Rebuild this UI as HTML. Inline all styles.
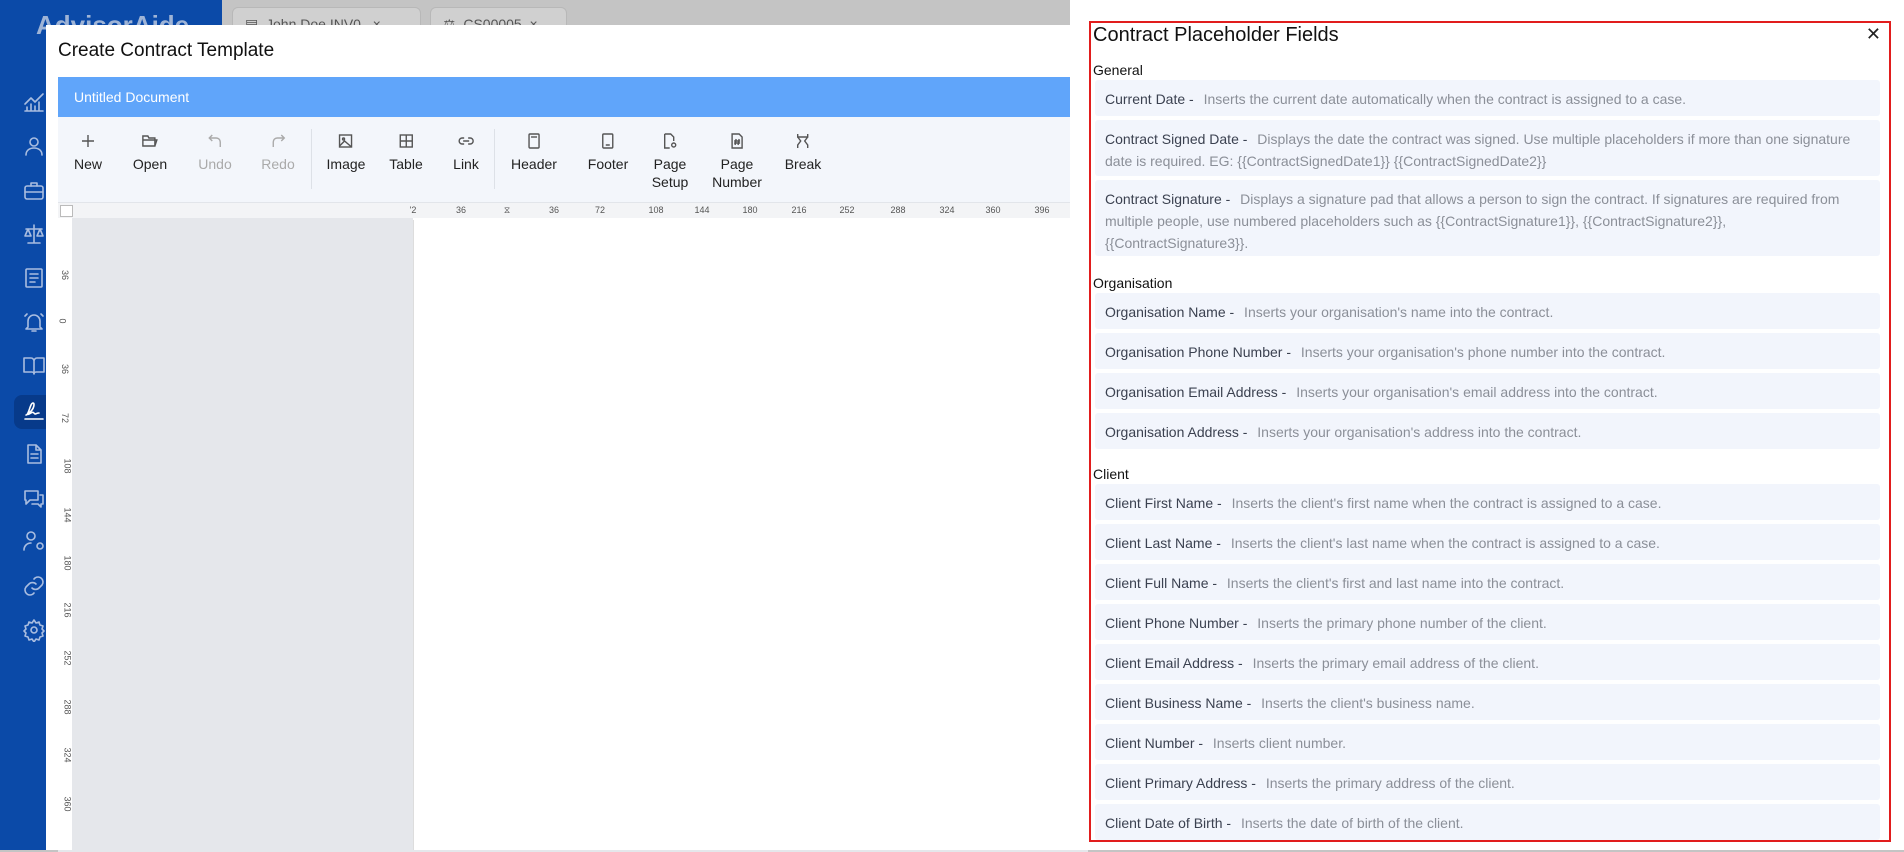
<!DOCTYPE html>
<html><head><meta charset="utf-8"><style>
*{box-sizing:border-box;margin:0;padding:0}
body{width:1904px;height:850px;overflow:hidden;font-family:"Liberation Sans",sans-serif;background:#c4c4c4;position:relative}
.abs{position:absolute}
.side{left:0;top:0;width:222px;height:850px;background:#0b4aa8}
.logo{left:36px;top:10px;font-size:26px;font-weight:bold;color:#9fb4d6}
.ic{position:absolute;left:22px;width:24px;height:24px}
.ic svg{width:24px;height:24px;fill:none;stroke:#a9bde0;stroke-width:1.6;stroke-linecap:round;stroke-linejoin:round}
.tab{top:7px;height:30px;background:#d0d0d0;border:1px solid #b8b8b8;border-radius:6px 6px 0 0;font-size:14px;color:#555;padding:8px 12px}
.modal{left:46px;top:25px;width:1030px;height:825px;background:#fff}
.mt{left:12px;top:15px;font-size:19px;color:#111}
.bar{left:12px;top:52px;width:1030px;height:40px;background:#60a5fa;color:#fff;font-size:14px;padding:12px 16px}
.tb{left:12px;top:92px;width:1030px;height:86px;background:#f3f6fb;border-bottom:1px solid #e2e5ea}
.tbi{position:absolute;top:16px;text-align:center;font-size:14px;color:#222;line-height:18px;transform:translateX(-50%)}
.tbi svg{width:16px;height:16px;fill:none;stroke:#555;stroke-width:1.4;display:block;margin:0 auto 6px}
.dis{color:#aaa}.dis svg{stroke:#aaa}
.sep{position:absolute;top:12px;width:1px;height:60px;background:#dde1e7}
.panel{left:1070px;top:0;width:834px;height:850px;background:#fff}
.box{position:absolute;left:19px;top:21px;width:802px;height:821px;border:2px solid #e11d1d}
.pt{position:absolute;left:2px;top:1px;font-size:20px;color:#111}
.x{position:absolute;right:8px;top:1px;font-size:18px;color:#222}
.sec{position:absolute;left:2px;font-size:14px;color:#111}
.row{position:absolute;left:4px;width:785px;background:#f2f5fc;border-radius:3px;padding:8px 10px;font-size:14px;line-height:22px;color:#8b8f98}
.row b{font-weight:normal;color:#3b4150;margin-right:6px}
.rl{position:absolute;top:2px;font-size:9px;color:#555;transform:translateX(-50%)}
.vl{position:absolute;left:2px;font-size:9px;color:#555;transform:rotate(90deg)}
</style></head><body>
<div class="abs side"></div>
<div class="abs logo">AdvisorAide</div>
<div class="abs" style="left:14px;top:395px;width:40px;height:34px;background:#073a8a;border-radius:8px"></div>
<div class="ic" style="top:91px"><svg viewBox="0 0 24 24"><path d="M3 20h18M5 16v4M9 13v7M13 15v5M17 11v9M3 13l6-6 4 4 8-8"/></svg></div>
<div class="ic" style="top:134px"><svg viewBox="0 0 24 24"><circle cx="12" cy="8" r="4"/><path d="M4 21c0-5 4-7 8-7s8 2 8 7"/></svg></div>
<div class="ic" style="top:179px"><svg viewBox="0 0 24 24"><rect x="3" y="7" width="18" height="13" rx="2"/><path d="M9 7V4h6v3M3 13h18"/></svg></div>
<div class="ic" style="top:222px"><svg viewBox="0 0 24 24"><path d="M12 3v18M6 21h12M4 7h16M6 7l-3 7h6zM18 7l-3 7h6z"/></svg></div>
<div class="ic" style="top:266px"><svg viewBox="0 0 24 24"><rect x="4" y="3" width="16" height="18" rx="1"/><path d="M8 8h8M8 12h8M8 16h5"/></svg></div>
<div class="ic" style="top:310px"><svg viewBox="0 0 24 24"><path d="M6 17V11a6 6 0 0 1 12 0v6l2 2H4zM10 21h4M3 6l2-2M21 6l-2-2"/></svg></div>
<div class="ic" style="top:353px"><svg viewBox="0 0 24 24"><path d="M2 5h7a3 3 0 0 1 3 3v13a2 2 0 0 0-2-2H2zM22 5h-7a3 3 0 0 0-3 3v13a2 2 0 0 1 2-2h8z"/></svg></div>
<div class="ic" style="top:398px"><svg viewBox="0 0 24 24" style="stroke:#fff"><path d="M3 21h18M4 17c3 0 4-12 7-12 2 0 1 6-3 9s-2 3 1 1 3 1 4 1 2-1 4-1"/></svg></div>
<div class="ic" style="top:442px"><svg viewBox="0 0 24 24"><path d="M6 3h8l5 5v13H6zM14 3v5h5M9 12h7M9 16h7"/></svg></div>
<div class="ic" style="top:486px"><svg viewBox="0 0 24 24"><path d="M3 5h13v9H8l-4 4v-4H3zM18 9h3v9h-2v3l-3-3h-6"/></svg></div>
<div class="ic" style="top:529px"><svg viewBox="0 0 24 24"><circle cx="9" cy="7" r="4"/><path d="M2 21c0-4 3-7 7-7M18 14a3 3 0 1 0 0 6 3 3 0 0 0 0-6z"/></svg></div>
<div class="ic" style="top:574px"><svg viewBox="0 0 24 24"><path d="M10 14a5 5 0 0 0 7 0l3-3a5 5 0 0 0-7-7l-1 1M14 10a5 5 0 0 0-7 0l-3 3a5 5 0 0 0 7 7l1-1"/></svg></div>
<div class="ic" style="top:618px"><svg viewBox="0 0 24 24"><circle cx="12" cy="12" r="3"/><path d="M12 2l2 3 3-1 1 3 3 1-1 3 2 2-2 2 1 3-3 1-1 3-3-1-2 3-2-3-3 1-1-3-3-1 1-3-2-2 2-2-1-3 3-1 1-3 3 1z"/></svg></div>
<div class="abs tab" style="left:232px;width:189px">▤ &nbsp;John Doe INV0 &nbsp; ×</div>
<div class="abs tab" style="left:430px;width:137px">⚖ &nbsp;CS00005 &nbsp;×</div>

<div class="abs modal">
<div class="abs mt">Create Contract Template</div>
<div class="abs bar">Untitled Document</div>
<div class="abs tb">
<div class="tbi" style="left:30px"><svg viewBox="0 0 16 16"><path d="M8 2v12M2 8h12"/></svg>New</div>
<div class="tbi" style="left:92px"><svg viewBox="0 0 16 16"><path d="M1 3h5l1 2h6v8H1zM1 7h14l-2 6"/></svg>Open</div>
<div class="tbi dis" style="left:157px"><svg viewBox="0 0 16 16"><path d="M5 2L2 5l3 3M2 5h7a4 4 0 0 1 4 4v5"/></svg>Undo</div>
<div class="tbi dis" style="left:220px"><svg viewBox="0 0 16 16"><path d="M11 2l3 3-3 3M14 5H7a4 4 0 0 0-4 4v5"/></svg>Redo</div>
<div class="sep" style="left:253px"></div>
<div class="tbi" style="left:288px"><svg viewBox="0 0 16 16"><rect x="2" y="2" width="12" height="12"/><circle cx="6" cy="6" r="1"/><path d="M2 13l5-5 7 6"/></svg>Image</div>
<div class="tbi" style="left:348px"><svg viewBox="0 0 16 16"><rect x="2" y="2" width="12" height="12"/><path d="M8 2v12M2 8h12"/></svg>Table</div>
<div class="tbi" style="left:408px"><svg viewBox="0 0 16 16"><path d="M6 5H4a3 3 0 0 0 0 6h2M10 5h2a3 3 0 0 1 0 6h-2M5 8h6"/></svg>Link</div>
<div class="sep" style="left:436px"></div>
<div class="tbi" style="left:476px"><svg viewBox="0 0 16 16"><rect x="3" y="1" width="10" height="14" rx="1"/><path d="M5 4h6"/></svg>Header</div>
<div class="tbi" style="left:550px"><svg viewBox="0 0 16 16"><rect x="3" y="1" width="10" height="14" rx="1"/><path d="M6 12h4"/></svg>Footer</div>
<div class="tbi" style="left:612px"><svg viewBox="0 0 16 16"><path d="M3 1h6l3 3v4M3 1v14h5"/><circle cx="12" cy="12" r="2"/></svg>Page<br>Setup</div>
<div class="tbi" style="left:679px"><svg viewBox="0 0 16 16"><path d="M3 1h7l3 3v11H3zM7 6l-1 6M10 6l-1 6M5 8h6M5 10h6"/></svg>Page<br>Number</div>
<div class="tbi" style="left:745px"><svg viewBox="0 0 16 16"><path d="M3 1v3h10V1M3 15v-3l3-4-3-4M13 15v-3l-3-4 3-4"/></svg>Break</div>
</div>
<div class="abs" style="left:12px;top:178px;width:1030px;height:15px;background:#f3f4f6">
<span class="rl" style="left:355px">'2</span><span class="rl" style="left:403px">36</span><span class="rl" style="left:449px">⧖</span><span class="rl" style="left:496px">36</span><span class="rl" style="left:542px">72</span><span class="rl" style="left:598px">108</span><span class="rl" style="left:644px">144</span><span class="rl" style="left:692px">180</span><span class="rl" style="left:741px">216</span><span class="rl" style="left:789px">252</span><span class="rl" style="left:840px">288</span><span class="rl" style="left:889px">324</span><span class="rl" style="left:935px">360</span><span class="rl" style="left:984px">396</span>
</div>
<div class="abs" style="left:14px;top:180px;width:13px;height:12px;border:1px solid #bbb;background:#fff"></div>
<div class="abs" style="left:12px;top:193px;width:15px;height:632px;background:#fff;border-right:1px solid #e5e7eb">
<span class="vl" style="top:52px">36</span><span class="vl" style="top:98px">0</span><span class="vl" style="top:146px">36</span><span class="vl" style="top:195px">72</span><span class="vl" style="top:243px">108</span><span class="vl" style="top:292px">144</span><span class="vl" style="top:340px">180</span><span class="vl" style="top:387px">216</span><span class="vl" style="top:435px">252</span><span class="vl" style="top:484px">288</span><span class="vl" style="top:532px">324</span><span class="vl" style="top:581px">360</span>
</div>
<div class="abs" style="left:27px;top:193px;width:340px;height:632px;background:#e5e7eb"></div>
<div class="abs" style="left:367px;top:195px;width:670px;height:630px;background:#fff;border-left:1px solid #ddd"></div>
<div class="abs" style="left:12px;top:825px;width:1030px;height:2px;background:#e5e7eb"></div>
</div>

<div class="abs panel">
<div class="box">
<div class="pt">Contract Placeholder Fields</div>
<div class="x">✕</div>
<div class="sec" style="top:39px">General</div>
<div class="row" style="top:57px;height:36px"><b>Current Date -</b> Inserts the current date automatically when the contract is assigned to a case.</div>
<div class="row" style="top:97px;height:56px"><b>Contract Signed Date -</b> Displays the date the contract was signed. Use multiple placeholders if more than one signature date is required. EG: {{ContractSignedDate1}} {{ContractSignedDate2}}</div>
<div class="row" style="top:157px;height:76px"><b>Contract Signature -</b> Displays a signature pad that allows a person to sign the contract. If signatures are required from multiple people, use numbered placeholders such as {{ContractSignature1}}, {{ContractSignature2}}, {{ContractSignature3}}.</div>
<div class="sec" style="top:252px">Organisation</div>
<div class="row" style="top:270px;height:36px"><b>Organisation Name -</b> Inserts your organisation's name into the contract.</div>
<div class="row" style="top:310px;height:36px"><b>Organisation Phone Number -</b> Inserts your organisation's phone number into the contract.</div>
<div class="row" style="top:350px;height:36px"><b>Organisation Email Address -</b> Inserts your organisation's email address into the contract.</div>
<div class="row" style="top:390px;height:36px"><b>Organisation Address -</b> Inserts your organisation's address into the contract.</div>
<div class="sec" style="top:443px">Client</div>
<div class="row" style="top:461px;height:36px"><b>Client First Name -</b> Inserts the client's first name when the contract is assigned to a case.</div>
<div class="row" style="top:501px;height:36px"><b>Client Last Name -</b> Inserts the client's last name when the contract is assigned to a case.</div>
<div class="row" style="top:541px;height:36px"><b>Client Full Name -</b> Inserts the client's first and last name into the contract.</div>
<div class="row" style="top:581px;height:36px"><b>Client Phone Number -</b> Inserts the primary phone number of the client.</div>
<div class="row" style="top:621px;height:36px"><b>Client Email Address -</b> Inserts the primary email address of the client.</div>
<div class="row" style="top:661px;height:36px"><b>Client Business Name -</b> Inserts the client's business name.</div>
<div class="row" style="top:701px;height:36px"><b>Client Number -</b> Inserts client number.</div>
<div class="row" style="top:741px;height:36px"><b>Client Primary Address -</b> Inserts the primary address of the client.</div>
<div class="row" style="top:781px;height:36px"><b>Client Date of Birth -</b> Inserts the date of birth of the client.</div>
</div>
</div>
</body></html>
